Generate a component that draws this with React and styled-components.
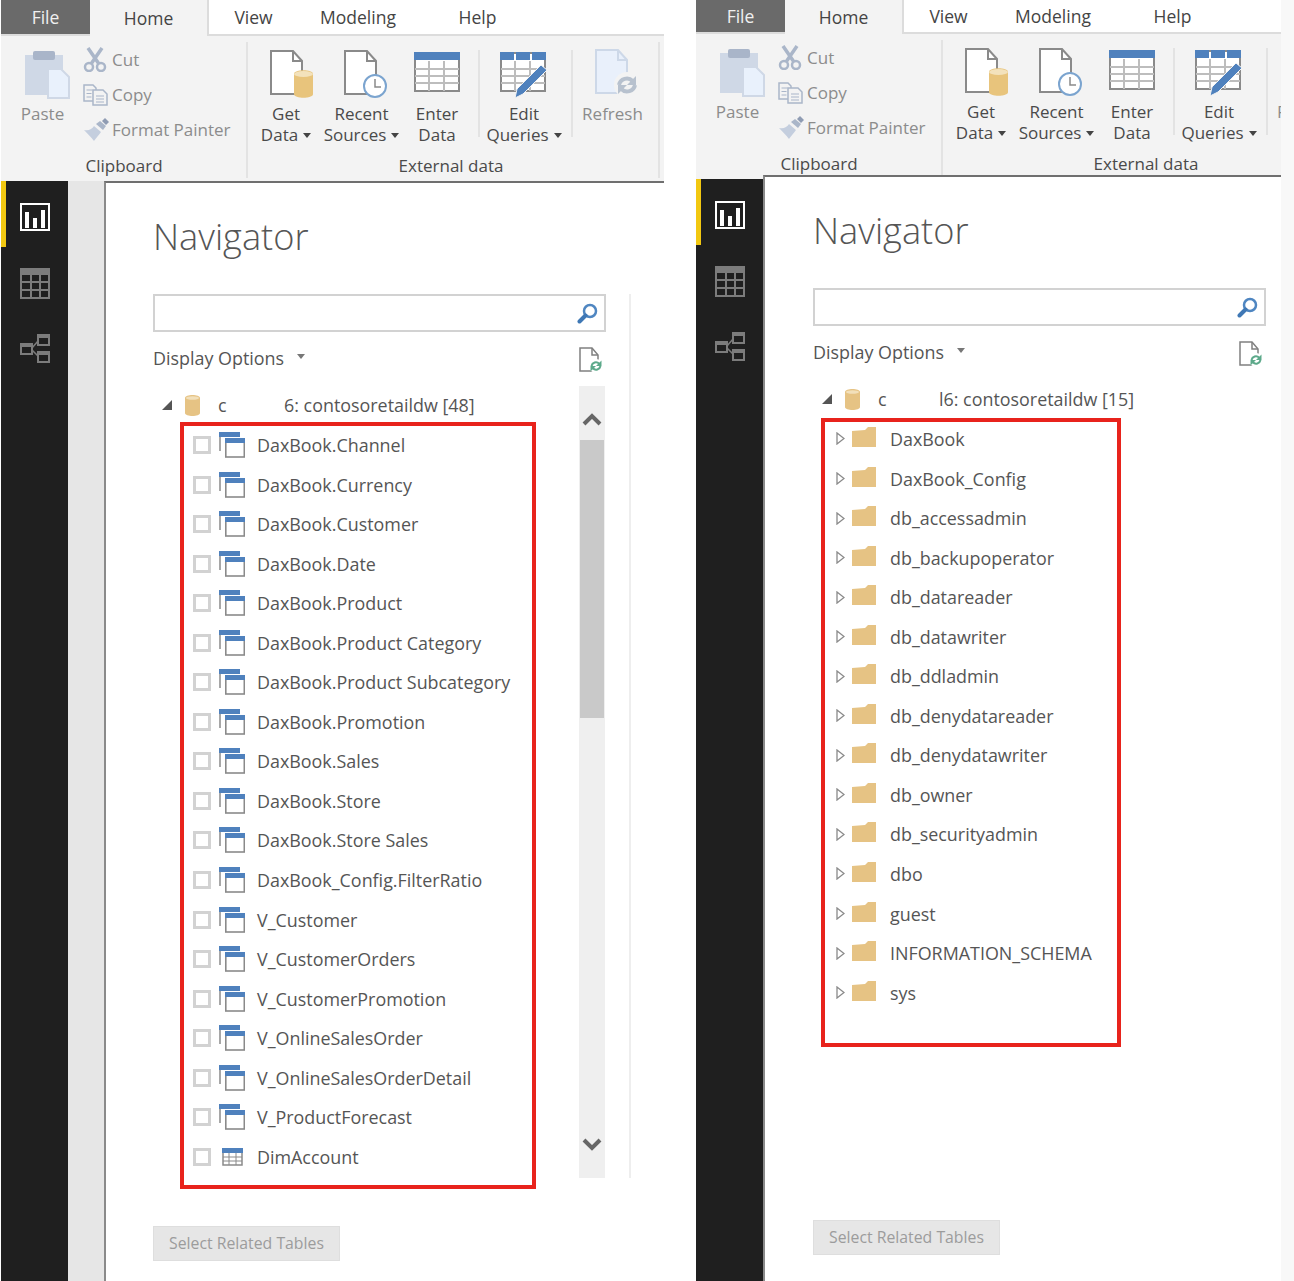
import React from 'react'
import styled, { createGlobalStyle } from 'styled-components'

const GlobalStyle = createGlobalStyle`
  html, body {
    margin: 0;
    padding: 0;
    background: #fff;
    overflow: hidden;
  }
  body {
    font-family: "Open Sans", "Liberation Sans", sans-serif;
    color: #555;
  }
`

const Page = styled.div`
  display: flex;
  height: 1281px;
  padding-left: 1px;
  background: #fff;
`

const Window = styled.div`
  position: relative;
  display: flex;
  flex-direction: column;
  flex: none;
  width: ${p => p.$width}px;
  margin-right: ${p => p.$gap}px;
  height: 100%;
  overflow: hidden;
`

const Strip = styled.div`
  flex: 1;
  background: #f8f8f8;
`

const TabBar = styled.div`
  display: flex;
  flex: none;
  height: ${p => p.$height}px;
  min-width: 663px;
  box-sizing: border-box;
  border-bottom: 2px solid #dcdcdc;
`

const Tab = styled.div`
  flex: none;
  width: ${p => p.$width}px;
  height: ${p => (p.$active ? 'calc(100% + 2px)' : '100%')};
  display: flex;
  align-items: center;
  justify-content: center;
  box-sizing: border-box;
  font-size: 17.5px;
  color: ${p => (p.$file ? '#f0f0f0' : '#444')};
  background: ${p => (p.$file ? '#6a6a6a' : p.$active ? '#f3f3f3' : '#fff')};
  border-right: ${p => (p.$active ? '2px solid #dcdcdc' : 'none')};
  position: relative;
`

const Ribbon = styled.div`
  display: flex;
  flex: none;
  height: 145px;
  width: 100%;
  background: #f3f3f3;
`

const Group = styled.div`
  flex: none;
  display: flex;
  flex-direction: column;
  width: ${p => p.$width}px;
  box-sizing: border-box;
  margin: 6px 0 3px;
  padding-left: ${p => p.$inset || 0}px;
  border-right: 2px solid #e3e3e3;
`

const GroupBody = styled.div`
  flex: 1;
  display: flex;
  min-height: 0;
`

const GroupLabel = styled.div`
  height: 24px;
  line-height: 24px;
  padding-right: ${p => p.$shift || 0}px;
  text-align: center;
  font-size: 17px;
  color: #4a4a4a;
  white-space: nowrap;
`

const BigButton = styled.div`
  flex: none;
  width: ${p => p.$width}px;
  display: flex;
  flex-direction: column;
  align-items: center;
  font-size: 17px;
  line-height: 21px;
  color: ${p => (p.$disabled ? '#8c8c8c' : '#4a4a4a')};
  text-align: center;
  white-space: nowrap;
`

const IconSlot = styled.div`
  height: 56px;
  box-sizing: border-box;
  margin-bottom: 4.5px;
  padding-top: ${p => p.$top}px;
  padding-left: ${p => p.$left || 0}px;
  display: flex;
  align-items: flex-start;
  justify-content: center;
`

const Caret = styled.span`
  display: inline-block;
  margin-left: 5px;
  vertical-align: 3px;
  border-left: 4px solid transparent;
  border-right: 4px solid transparent;
  border-top: 5px solid #444;
`

const SmallColumn = styled.div`
  display: flex;
  flex-direction: column;
`

const SmallButton = styled.div`
  display: flex;
  align-items: center;
  height: 35px;
  font-size: 17px;
  color: #8c8c8c;
  white-space: nowrap;
`

const SmallIcon = styled.span`
  display: flex;
  flex: none;
  width: 29px;
  justify-content: flex-start;
`

const RibbonRule = styled.div`
  flex: none;
  width: 2px;
  height: 87px;
  margin: 8px 0 0 3px;
  background: #e3e3e3;
`

const Body = styled.div`
  flex: 1;
  display: flex;
  min-height: 0;
`

const Rail = styled.div`
  flex: none;
  width: 67px;
  background: #1f1f1f;
`

const NavItem = styled.div`
  height: 66px;
  box-sizing: border-box;
  display: flex;
  align-items: center;
  justify-content: center;
  padding: 6px 5px 0 0;
  border-left: 5px solid ${p => (p.$active ? '#f2c811' : 'transparent')};
`

const Gutter = styled.div`
  flex: none;
  width: 36px;
  background: #e6e6e6;
`

const Canvas = styled.div`
  position: relative;
  flex: 1;
  min-width: 0;
  margin-top: ${p => p.$lift}px;
  box-sizing: border-box;
  background: #fff;
  border-top: 2px solid #6f6f6f;
  border-left: 2px solid #8a8a8a;
  padding: 28px 0 0 ${p => p.$pad}px;
`

const Title = styled.h1`
  margin: 0;
  height: 50px;
  line-height: 50px;
  font-size: 36.2px;
  font-weight: 300;
  color: #555;
`

const MainRow = styled.div`
  display: flex;
  margin-top: 33px;
`

const Panel = styled.div`
  flex: none;
  width: 453px;
`

const Search = styled.div`
  height: 38px;
  box-sizing: border-box;
  border: 2px solid #d2d2d2;
  display: flex;
  align-items: center;
  justify-content: flex-end;
  padding-right: 6px;
`

const OptionsRow = styled.div`
  display: flex;
  align-items: center;
  justify-content: space-between;
  height: 26px;
  margin-top: 13px;
  padding-right: 3px;
  font-size: 17.9px;
`

const OptionsLabel = styled.span`
  display: flex;
  align-items: center;
`

const OptionsCaret = styled.span`
  margin-left: 13px;
  margin-top: -4px;
  border-left: 4px solid transparent;
  border-right: 4px solid transparent;
  border-top: 5px solid #777;
`

const SyncSlot = styled.span`
  display: flex;
  margin-top: 3px;
`

const TreeArea = styled.div`
  display: flex;
  height: 792px;
  margin-top: 15px;
`

const Tree = styled.div`
  flex: 1;
  min-width: 0;
  padding-top: 8px;
`

const TreeHead = styled.div`
  display: flex;
  align-items: center;
  height: 22px;
  margin-bottom: 9.2px;
  padding-left: 9px;
  font-size: 17.9px;
  white-space: nowrap;
`

const HeadTriangle = styled.span`
  flex: none;
  width: 0;
  height: 0;
  border-style: solid;
  border-width: 0 0 10px 10px;
  border-color: transparent transparent #555 transparent;
  margin-right: 13px;
`

const HeadName = styled.span`
  flex: none;
  width: ${p => p.$width}px;
  margin-left: 18px;
`

const Row = styled.div`
  display: flex;
  align-items: center;
  height: 39.56px;
  padding-left: ${p => p.$indent}px;
  font-size: 17.9px;
  white-space: nowrap;
`

const Check = styled.span`
  flex: none;
  width: 18px;
  height: 18px;
  box-sizing: border-box;
  border: 3px solid #d2d2d2;
  margin-right: 8px;
`

const RowIcon = styled.span`
  flex: none;
  display: flex;
  justify-content: center;
  width: ${p => p.$width}px;
  margin-right: ${p => p.$gap}px;
`

const Expander = styled.svg`
  flex: none;
  margin-right: 7px;
`

const ScrollBar = styled.div`
  flex: none;
  width: 26px;
  margin-right: 1px;
  display: flex;
  flex-direction: column;
  align-items: center;
  background: #efefef;
`

const ScrollButton = styled.div`
  flex: none;
  height: ${p => p.$height}px;
  box-sizing: border-box;
  padding-top: ${p => p.$nudge}px;
  display: flex;
  align-items: center;
  justify-content: center;
`

const ScrollThumb = styled.div`
  flex: none;
  width: 24px;
  height: 278px;
  background: #c9c9c9;
`

const ScrollRest = styled.div`
  flex: 1;
`

const SideRule = styled.div`
  flex: none;
  width: 2px;
  margin-left: 23px;
  background: #eeeeee;
`

const ActionButton = styled.div`
  width: 187px;
  height: 35px;
  margin-top: 48px;
  padding-bottom: 2px;
  box-sizing: border-box;
  border: 1px solid #dedede;
  background: #e6e6e6;
  display: flex;
  align-items: center;
  justify-content: center;
  font-size: 15.8px;
  color: #9c9c9c;
  white-space: nowrap;
`

// the red annotation drawn over the screenshot
const Callout = styled.div`
  position: absolute;
  left: ${p => p.$left}px;
  top: ${p => p.$top}px;
  width: ${p => p.$width}px;
  height: ${p => p.$height}px;
  box-sizing: border-box;
  border: 4px solid #e8231c;
  pointer-events: none;
`

const PasteIcon = () => (
  <svg width="46" height="49" viewBox="0 0 46 49">
    <rect x="1" y="5" width="38" height="40" fill="#cfd8e6" />
    <rect x="9" y="1" width="22" height="9" rx="2" fill="#a9b5c9" />
    <path d="M24 19h13l8 8v21H24z" fill="#e9f1fc" stroke="#cfd8e6" strokeWidth="2" />
  </svg>
)

const CutIcon = () => (
  <svg width="24" height="25" viewBox="0 0 24 25" fill="none" stroke="#aab6c9">
    <path d="M5 1l11 16M19 1L8 17" strokeWidth="3.5" />
    <circle cx="6" cy="20" r="4" strokeWidth="2.5" />
    <circle cx="18" cy="20" r="4" strokeWidth="2.5" />
  </svg>
)

const CopyIcon = () => (
  <svg width="25" height="22" viewBox="0 0 25 22" fill="#f3f3f3" stroke="#aab6c9" strokeWidth="1.5">
    <path d="M1 1h9l3 3v13H1z" />
    <path d="M10 6h10l4 4v11H10z" />
    <path d="M3.5 6h6M3.5 9.5h5M3.5 13h5M13 12h8M13 15h8M13 18h8" strokeWidth="1.2" />
  </svg>
)

const BrushIcon = () => (
  <svg width="26" height="23" viewBox="0 0 26 23">
    <path d="M1 12c5 1 8-1 10-4l7 6c-2 3-5 6-7 9C8 19 4 15 1 12z" fill="#c4cede" />
    <path d="M13 6l4-3 6 5-3 4z" fill="#aab6c9" />
    <path d="M19 3l3-3 4 4-3 3z" fill="#8f9cb3" />
  </svg>
)

const DocIcon = ({ children, w = 44 }) => (
  <svg width={w} height="48" viewBox={`0 0 ${w} 48`}>
    <path d="M1 1h22l9 10v33H1z" fill="#fff" stroke="#8a8a8a" strokeWidth="2" />
    <path d="M23 1v10h9" fill="none" stroke="#8a8a8a" strokeWidth="2" />
    {children}
  </svg>
)

const GetDataIcon = () => (
  <DocIcon>
    <path d="M24 24c0-5 19-5 19 0v20c0 5-19 5-19 0z" fill="#e8c47c" />
    <ellipse cx="33.500" cy="24" rx="9.500" ry="3" fill="#f3e2bc" />
  </DocIcon>
)

const RecentIcon = () => (
  <DocIcon>
    <circle cx="31" cy="36" r="11" fill="#fff" stroke="#7ba4cf" strokeWidth="2" />
    <path d="M31 29v8h6" fill="none" stroke="#8a8a8a" strokeWidth="1.500" />
  </DocIcon>
)

const GridLines = ({ stroke }) => (
  <path d="M15 9v30M30 9v30M1 17h44M1 24h44M1 31h44" fill="none" stroke={stroke} strokeWidth="2" />
)

const EnterDataIcon = () => (
  <svg width="46" height="40" viewBox="0 0 46 40">
    <rect x="1" y="1" width="44" height="38" fill="#fff" stroke="#8a8a8a" strokeWidth="2" />
    <GridLines stroke="#bdbdbd" />
    <rect x="0" y="0" width="46" height="8" fill="#4f81bd" />
  </svg>
)

const EditQueriesIcon = () => (
  <svg width="48" height="47" viewBox="0 0 48 47">
    <rect x="1" y="1" width="44" height="38" fill="#fff" stroke="#8a8a8a" strokeWidth="2" />
    <GridLines stroke="#bdbdbd" />
    <path d="M0 0h14v8H0zM16 0h14v8H16zM32 0h14v8H32z" fill="#4f81bd" />
    <path d="M17 37L41 13l6 5-24 24-8 4z" fill="#4f81bd" stroke="#f3f3f3" strokeWidth="1" />
  </svg>
)

const SyncArrows = ({ cx, cy, color, r = 8, w = 4 }) => (
  <g fill="none" stroke={color} strokeWidth={w}>
    <path d={`M${cx - r} ${cy}a${r} ${r} 0 0 1 ${r * 1.7} -${r * 0.5}`} />
    <path d={`M${cx + r} ${cy}a${r} ${r} 0 0 1 -${r * 1.7} ${r * 0.5}`} />
    <path d={`M${cx + r + 1} ${cy - r - 1}v${r + 1}h-${r + 1}z`} fill={color} stroke="none" />
    <path d={`M${cx - r - 1} ${cy + r + 1}v-${r + 1}h${r + 1}z`} fill={color} stroke="none" />
  </g>
)

const RefreshIcon = () => (
  <svg width="44" height="49" viewBox="0 0 44 49">
    <path d="M1 1h22l9 10v33H1z" fill="#e9f0fb" stroke="#cdd8e8" strokeWidth="2" />
    <path d="M23 1v10h9" fill="none" stroke="#cdd8e8" strokeWidth="2" />
    <circle cx="32" cy="36" r="13" fill="#f3f3f3" />
    <SyncArrows cx={32} cy={36} color="#b7c1ce" />
  </svg>
)

const ReportIcon = () => (
  <svg width="30" height="28" viewBox="0 0 30 28">
    <rect x="1" y="1" width="28" height="26" fill="none" stroke="#fff" strokeWidth="2" />
    <path d="M5 9h4v16H5zM13 15h4v10h-4zM21 7h4v18h-4z" fill="#fff" />
  </svg>
)

const DataIcon = () => (
  <svg width="30" height="31" viewBox="0 0 30 31" fill="none" stroke="#7c7c7c" strokeWidth="2">
    <rect x="1" y="1" width="28" height="29" />
    <rect x="0" y="0" width="30" height="7" fill="#7c7c7c" stroke="none" />
    <path d="M11 7v23M20 7v23M1 14h28M1 22h28" />
  </svg>
)

const ModelIcon = () => (
  <svg width="30" height="30" viewBox="0 0 30 30" fill="none" stroke="#7c7c7c" strokeWidth="2">
    <rect x="1" y="10" width="11" height="10" />
    <rect x="18" y="1" width="11" height="10" />
    <rect x="18" y="18" width="11" height="10" />
    <path d="M12 14l6-7M12 16l6 6" strokeWidth="1.500" />
    <path d="M0 9h13v4H0zM17 0h13v4H17zM17 17h13v4H17z" fill="#7c7c7c" stroke="none" />
  </svg>
)

const MagnifierIcon = () => (
  <svg width="21" height="21" viewBox="0 0 21 21" fill="none">
    <circle cx="13" cy="8" r="6" stroke="#4f86c1" strokeWidth="2.500" />
    <path d="M8.500 12.500L2.500 18.500" stroke="#3f78b5" strokeWidth="4" strokeLinecap="round" />
  </svg>
)

const DocSyncIcon = () => (
  <svg width="24" height="26" viewBox="0 0 24 26" fill="none">
    <path d="M1 1h12l6 7v16H1z" fill="#fff" stroke="#808080" strokeWidth="1.500" />
    <path d="M13 1v7h6" stroke="#808080" strokeWidth="1.500" />
    <circle cx="17" cy="19" r="7" fill="#fff" />
    <SyncArrows cx={17} cy={19} color="#5ca98a" r={4.5} w={2} />
  </svg>
)

const ChevronIcon = ({ up }) => (
  <svg width="20" height="14" viewBox="0 0 20 14" fill="none">
    <path d={up ? 'M2 12l8-8 8 8' : 'M2 2l8 8 8-8'} stroke="#666" strokeWidth="4" />
  </svg>
)

const DbIcon = () => (
  <svg width="15" height="21" viewBox="0 0 15 21">
    <path d="M0 3c0-4 15-4 15 0v15c0 4-15 4-15 0z" fill="#e6c384" />
    <ellipse cx="7.500" cy="3" rx="6.500" ry="1.800" fill="#f2e0bb" />
  </svg>
)

const ViewIcon = () => (
  <svg width="26" height="26" viewBox="0 0 26 26" fill="none">
    <path d="M1 5v14M3 1h17" stroke="#8a8a8a" strokeWidth="1.500" />
    <rect x="0" y="0" width="21" height="5" fill="#4f81bd" />
    <rect x="6.800" y="7" width="18.500" height="18" fill="#fff" stroke="#8a8a8a" strokeWidth="1.600" />
    <rect x="6" y="6" width="20" height="5" fill="#4f81bd" />
  </svg>
)

const TableIcon = () => (
  <svg width="21" height="18" viewBox="0 0 21 18" fill="#fff" stroke="#8a8a8a" strokeWidth="1.500">
    <rect x="1" y="1" width="19" height="16" />
    <path d="M7 5v12M14 5v12M1 9h19M1 13h19" strokeWidth="1" />
    <rect x="0" y="0" width="21" height="5" fill="#4f81bd" stroke="none" />
  </svg>
)

const FolderIcon = () => (
  <svg width="24" height="24" viewBox="0 0 24 24">
    <path d="M0 4l13-1 3-3h8v20H0z" fill="#e6c384" />
  </svg>
)

const ExpanderIcon = () => (
  <Expander width="9" height="13" viewBox="0 0 9 13">
    <path d="M1 1l7 5.500-7 5.500z" fill="#fff" stroke="#8a8a8a" strokeWidth="1.300" />
  </Expander>
)

const TableName = ({ name, plain }) => (
  <Row $indent={40}>
    <Check />
    <RowIcon $width={26} $gap={12}>{plain ? <TableIcon /> : <ViewIcon />}</RowIcon>
    {name}
  </Row>
)

const FolderName = ({ name }) => (
  <Row $indent={23}>
    <ExpanderIcon />
    <RowIcon $width={24} $gap={14}><FolderIcon /></RowIcon>
    {name}
  </Row>
)

const tables = [
  'DaxBook.Channel',
  'DaxBook.Currency',
  'DaxBook.Customer',
  'DaxBook.Date',
  'DaxBook.Product',
  'DaxBook.Product Category',
  'DaxBook.Product Subcategory',
  'DaxBook.Promotion',
  'DaxBook.Sales',
  'DaxBook.Store',
  'DaxBook.Store Sales',
  'DaxBook_Config.FilterRatio',
  'V_Customer',
  'V_CustomerOrders',
  'V_CustomerPromotion',
  'V_OnlineSalesOrder',
  'V_OnlineSalesOrderDetail',
  'V_ProductForecast',
]

const schemas = [
  'DaxBook',
  'DaxBook_Config',
  'db_accessadmin',
  'db_backupoperator',
  'db_datareader',
  'db_datawriter',
  'db_ddladmin',
  'db_denydatareader',
  'db_denydatawriter',
  'db_owner',
  'db_securityadmin',
  'dbo',
  'guest',
  'INFORMATION_SCHEMA',
  'sys',
]

const TopTabs = ({ height }) => (
  <TabBar $height={height}>
    <Tab $file $width={89}>File</Tab>
    <Tab $active $width={119}>Home</Tab>
    <Tab $width={89}>View</Tab>
    <Tab $width={120}>Modeling</Tab>
    <Tab $width={119}>Help</Tab>
  </TabBar>
)

const HomeRibbon = () => (
  <Ribbon>
    <Group $width={247} $inset={1}>
      <GroupBody>
        <BigButton $width={81} $disabled>
          <IconSlot $top={8} $left={8}><PasteIcon /></IconSlot>
          Paste
        </BigButton>
        <SmallColumn>
          <SmallButton><SmallIcon><CutIcon /></SmallIcon>Cut</SmallButton>
          <SmallButton><SmallIcon><CopyIcon /></SmallIcon>Copy</SmallButton>
          <SmallButton><SmallIcon><BrushIcon /></SmallIcon>Format Painter</SmallButton>
        </SmallColumn>
      </GroupBody>
      <GroupLabel>Clipboard</GroupLabel>
    </Group>
    <Group $width={412}>
      <GroupBody>
        <BigButton $width={76}>
          <IconSlot $top={8} $left={11}><GetDataIcon /></IconSlot>
          <span>Get</span>
          <span>Data<Caret /></span>
        </BigButton>
        <BigButton $width={75}>
          <IconSlot $top={8} $left={8}><RecentIcon /></IconSlot>
          <span>Recent</span>
          <span>Sources<Caret /></span>
        </BigButton>
        <BigButton $width={76}>
          <IconSlot $top={10}><EnterDataIcon /></IconSlot>
          <span>Enter</span>
          <span>Data</span>
        </BigButton>
        <RibbonRule />
        <BigButton $width={88}>
          <IconSlot $top={10}><EditQueriesIcon /></IconSlot>
          <span>Edit</span>
          <span>Queries<Caret /></span>
        </BigButton>
        <RibbonRule />
        <BigButton $width={79} $disabled>
          <IconSlot $top={7} $left={8}><RefreshIcon /></IconSlot>
          Refresh
        </BigButton>
      </GroupBody>
      <GroupLabel $shift={4}>External data</GroupLabel>
    </Group>
  </Ribbon>
)

const NavRail = () => (
  <Rail>
    <NavItem $active><ReportIcon /></NavItem>
    <NavItem><DataIcon /></NavItem>
    <NavItem><ModelIcon /></NavItem>
  </Rail>
)

const Navigator = ({ count, nameWidth, scroll, pad, lift, children }) => (
  <Canvas $pad={pad} $lift={lift}>
    <Title>Navigator</Title>
    <MainRow>
      <Panel>
        <Search><MagnifierIcon /></Search>
        <OptionsRow>
          <OptionsLabel>Display Options<OptionsCaret /></OptionsLabel>
          <SyncSlot><DocSyncIcon /></SyncSlot>
        </OptionsRow>
        <TreeArea>
          <Tree>
            <TreeHead>
              <HeadTriangle />
              <DbIcon />
              <HeadName $width={nameWidth}>c</HeadName>
              {count}
            </TreeHead>
            {children}
          </Tree>
          {scroll && (
            <ScrollBar>
              <ScrollButton $height={54} $nudge={12}><ChevronIcon up /></ScrollButton>
              <ScrollThumb />
              <ScrollRest />
              <ScrollButton $height={70} $nudge={4}><ChevronIcon /></ScrollButton>
            </ScrollBar>
          )}
        </TreeArea>
      </Panel>
      {scroll && <SideRule />}
    </MainRow>
    <ActionButton>Select Related Tables</ActionButton>
  </Canvas>
)

export default function App() {
  return (
    <Page>
      <GlobalStyle />
      <Window $width={663} $gap={32}>
        <TopTabs height={36} />
        <HomeRibbon />
        <Body>
          <NavRail />
          <Gutter />
          <Navigator count="6: contosoretaildw [48]" nameWidth={66} scroll pad={47} lift={0}>
            {tables.map(name => <TableName key={name} name={name} />)}
            <TableName name="DimAccount" plain />
          </Navigator>
        </Body>
        <Callout $left={179} $top={422} $width={356} $height={767} />
      </Window>
      <Window $width={585} $gap={0}>
        <TopTabs height={34} />
        <HomeRibbon />
        <Body>
          <NavRail />
          <Navigator count="l6: contosoretaildw [15]" nameWidth={61} pad={48} lift={-4}>
            {schemas.map(name => <FolderName key={name} name={name} />)}
          </Navigator>
        </Body>
        <Callout $left={125} $top={418} $width={300} $height={629} />
      </Window>
      <Strip />
    </Page>
  )
}
